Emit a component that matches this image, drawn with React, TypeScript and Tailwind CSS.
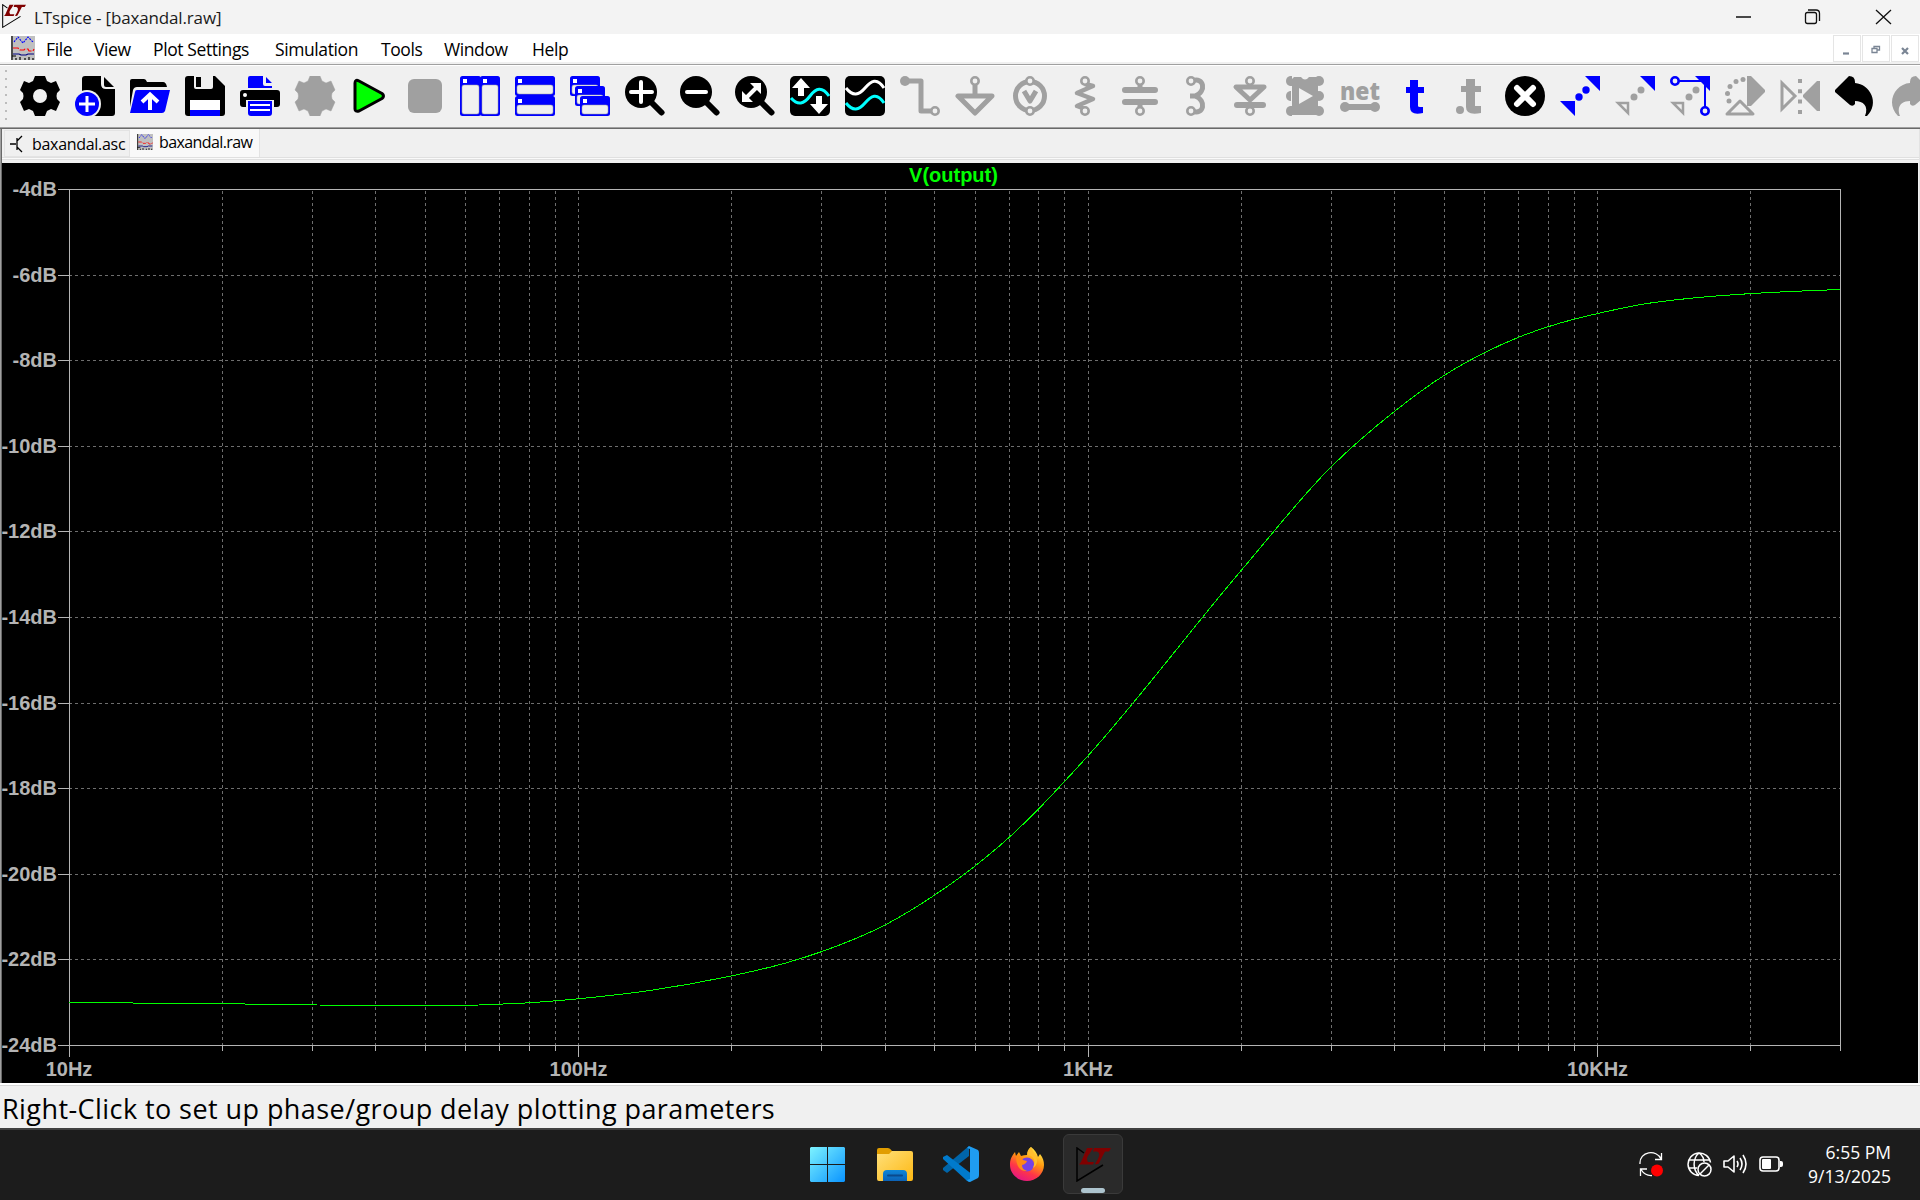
import React from "react";

type P = { children?: React.ReactNode };

const G = "#a0a0a0";
const B = "#0000ff";
const L = "#f0f0f0";

function Tool({ children }: P) {
  return (
    <svg width="40" height="40" viewBox="0 0 40 40" fill="none" className="shrink-0 overflow-visible">
      {children}
    </svg>
  );
}

const gearPath =
  "M15 0H25L27 5L31 7L36 5L40 14L37 17Q36 20 37 23L40 26L36 35L31 33L27 35L25 40H15L13 35L9 33L4 35L0 26L3 23Q4 20 3 17L0 14L4 5L9 7L13 5Z";

function Magnifier({ children }: P) {
  return (
    <Tool>
      <circle cx="16" cy="16" r="16" fill="#000" />
      <path d="M26 26L36.500 36.500" stroke="#000" strokeWidth="6" strokeLinecap="round" />
      {children}
    </Tool>
  );
}

function Pane({ x, y, w, h }: { x: number; y: number; w: number; h: number }) {
  return (
    <g>
      <rect x={x} y={y} width={w} height={h} rx="2.500" fill={B} />
      <rect x={x + 2} y={y + 9} width={w - 4} height={h - 11} rx="2" fill={L} stroke={G} strokeWidth="0.500" />
      <rect x={x + 3} y={y + 3} width="4" height="4" fill="#fff" />
    </g>
  );
}

const Pin = ({ x, y, c = G }: { x: number; y: number; c?: string }) => (
  <circle cx={x} cy={y} r="3.700" fill={L} stroke={c} strokeWidth="2.600" />
);

function Toolbar() {
  return (
    <div className="flex h-[61px] items-center overflow-hidden bg-[#f0f0f0] pb-[2px]">
      <svg width="20" height="57" className="shrink-0" stroke="#bcbcbc" strokeWidth="2">
        <path d="M6 3V56" strokeDasharray="2 6" />
      </svg>
      <div className="flex w-[1900px] gap-[15px] overflow-hidden">
        <Tool>
          <path d={gearPath} fill="#000" />
          <circle cx="20" cy="20" r="7" fill={L} />
        </Tool>
        <Tool>
          <path d="M10 0H26V8Q26 13 31 13H40V37Q40 40 37 40H7V3Q7 0 10 0Z" fill="#000" />
          <path d="M29 1L39 11H31Q29 11 29 9Z" fill="#000" />
          <circle cx="12" cy="28" r="14" fill={L} />
          <circle cx="12" cy="28" r="12" fill={B} />
          <path d="M12 20V36M4 28H20" stroke="#fff" strokeWidth="3" />
        </Tool>
        <Tool>
          <path d="M0 5Q0 3 2 3H14Q16 3 17 6H33Q36 6 37 11H7Q4 11 3 14L0 31Z" fill="#000" />
          <path d="M7 14H40L35 35Q34 37 32 37H0L5 16Q5 14 7 14Z" fill={B} />
          <path d="M20 20V34M12 26L20 18.500L28 26" stroke="#fff" strokeWidth="4" />
        </Tool>
        <Tool>
          <path d="M3 0H30L40 10V37Q40 40 37 40H3Q0 40 0 37V3Q0 0 3 0Z" fill="#000" />
          <path d="M9 0H28V11Q28 13 26 13H11Q9 13 9 11Z" fill={L} />
          <path d="M11 1H16V11H11Z" fill="#000" />
          <path d="M5 24H35V34H5Z" fill="#fff" />
          <path d="M5 34H35V40H5Z" fill={B} />
        </Tool>
        <Tool>
          <path d="M10 0H23V8Q23 10 25 10H32V12H8V2Q8 0 10 0ZM26 1L32 7H26Z" fill={B} />
          <path d="M3 14H37Q40 14 40 17V28Q40 31 37 31H34V24H6V31H3Q0 31 0 28V17Q0 14 3 14Z" fill="#000" />
          <circle cx="5" cy="19" r="2" fill="#fff" />
          <path d="M8 25H32V37Q32 40 29 40H11Q8 40 8 37Z" fill={B} />
          <path d="M10 29H30M10 34H30" stroke="#fff" strokeWidth="2" />
        </Tool>
        <Tool>
          <path d={gearPath} fill={G} stroke={G} strokeWidth="0.500" />
        </Tool>
        <Tool>
          <path d="M5 7Q5 3 9 5L32 17.500Q35 20 32 22.500L9 35Q5 36 5 33Z" fill="#00ff00" stroke="#000" strokeWidth="3" strokeLinejoin="round" />
        </Tool>
        <Tool>
          <rect x="3" y="3" width="34" height="34" rx="6" fill={G} />
        </Tool>
        <Tool>
          <Pane x={0} y={0} w={21} h={40} />
          <Pane x={20} y={0} w={20} h={40} />
        </Tool>
        <Tool>
          <Pane x={0} y={0} w={40} h={20} />
          <Pane x={0} y={20} w={40} h={20} />
        </Tool>
        <Tool>
          <Pane x={0} y={0} w={30} h={20} />
          <Pane x={5} y={10} w={30} h={20} />
          <Pane x={10} y={20} w={30} h={20} />
        </Tool>
        <Magnifier>
          <path d="M16 6V26M6 16H27" stroke="#fff" strokeWidth="4" strokeLinecap="round" />
        </Magnifier>
        <Magnifier>
          <path d="M7 16H26" stroke="#fff" strokeWidth="4" strokeLinecap="round" />
        </Magnifier>
        <Magnifier>
          <path d="M11 22L22 11" stroke="#fff" strokeWidth="4" />
          <path d="M15 7H26V18ZM7 15V26H18Z" fill="#fff" />
        </Magnifier>
        <Tool>
          <rect width="40" height="40" rx="5" fill="#000" />
          <path d="M1 22C8 30 14 28 20 20S32 10 39 20" stroke="#00ffff" strokeWidth="3" />
          <path d="M11 2L20 12H14V20H8V12H2ZM29 38L20 28H26V20H32V28H38Z" fill="#fff" />
        </Tool>
        <Tool>
          <rect width="40" height="40" rx="5" fill="#000" />
          <path d="M1 12C8 21 14 19 20 12S32 1 39 12" stroke="#fff" strokeWidth="3" />
          <path d="M1 27C8 36 14 34 20 27S32 16 39 27" stroke="#00ffff" strokeWidth="3" />
        </Tool>
        <Tool>
          <path d="M5 5H21V35H34" stroke={G} strokeWidth="5" strokeLinejoin="round" />
          <circle cx="5" cy="5" r="5" fill={G} />
          <Pin x={35} y={35} />
        </Tool>
        <Tool>
          <path d="M20 8V19" stroke={G} strokeWidth="5" />
          <path d="M3 20H37L20 37Z" stroke={G} strokeWidth="5" strokeLinejoin="round" />
          <Pin x={20} y={5} />
        </Tool>
        <Tool>
          <circle cx="20" cy="20" r="14.500" stroke={G} strokeWidth="5" />
          <path d="M14 15L20 25L26 15" stroke={G} strokeWidth="5" strokeLinejoin="round" />
          <Pin x={20} y={5} />
          <Pin x={20} y={35} />
        </Tool>
        <Tool>
          <path d="M20 8L28 10L12 17L28 23L12 30L20 33" stroke={G} strokeWidth="4.500" strokeLinejoin="round" />
          <Pin x={20} y={5} />
          <Pin x={20} y={35} />
        </Tool>
        <Tool>
          <path d="M5 14H35M5 26H35" stroke={G} strokeWidth="6" strokeLinecap="round" />
          <path d="M20 8V12M20 28V32" stroke={G} strokeWidth="5" />
          <Pin x={20} y={5} />
          <Pin x={20} y={35} />
        </Tool>
        <Tool>
          <path d="M17 5C29 0 32 16 20 20H15H20C32 24 29 40 17 35" stroke={G} strokeWidth="5" />
          <Pin x={16} y={5} />
          <Pin x={16} y={35} />
        </Tool>
        <Tool>
          <path d="M6 11H34L20 24Z" stroke={G} strokeWidth="5" strokeLinejoin="round" />
          <path d="M7 29H33" stroke={G} strokeWidth="6" strokeLinecap="round" />
          <Pin x={20} y={5} />
          <Pin x={20} y={35} />
        </Tool>
        <Tool>
          <path d="M9 1H16Q20 6 24 1H33V39H7V3Z" fill={G} />
          <g fill={G}>
            <path d="M5 0H7V10H5Q1 9 1 5T5 0ZM5 15H6V25H5Q1 24 1 20T5 15ZM5 30H7V40H5Q1 39 1 35T5 30Z" />
            <circle cx="34" cy="5" r="5" />
            <circle cx="34" cy="20" r="5" />
            <circle cx="34" cy="35" r="5" />
          </g>
          <path d="M14 12L28 20L14 28Z" fill={L} />
        </Tool>
        <Tool>
          <text x="0" y="24" fontFamily="Open Sans, sans-serif" fontWeight="800" fontSize="25" textLength="40" lengthAdjust="spacingAndGlyphs" fill={G}>
            net
          </text>
          <path d="M5 31H35" stroke={G} strokeWidth="6" />
          <circle cx="5" cy="31" r="5" fill={G} />
          <circle cx="35" cy="31" r="5" fill={G} />
        </Tool>
        <Tool>
          <path d="M15 4H23V11H29V17H23V30Q23 31 25 31H28V37Q15 40 15 31V17H11V11H15Z" fill={B} />
        </Tool>
        <Tool>
          <path d="M16 3H25V10H31V16H25V30H31V37Q16 40 16 31V16H11V10H16Z" fill={G} />
          <circle cx="10" cy="34" r="4" fill={G} />
        </Tool>
        <Tool>
          <circle cx="20" cy="20" r="20" fill="#000" />
          <path d="M12 12L28 28M28 12L12 28" stroke="#fff" strokeWidth="6" strokeLinecap="round" />
        </Tool>
        <Tool>
          <path d="M25 0H40V15ZM0 25H15V40Z" fill={B} />
          <circle cx="26" cy="14" r="3.700" fill={B} />
          <circle cx="19" cy="21" r="3.700" fill={B} />
        </Tool>
        <Tool>
          <path d="M25 0H40V15Z" fill={B} />
          <circle cx="26" cy="14" r="3.500" fill={G} />
          <circle cx="19" cy="21" r="3.500" fill={G} />
          <path d="M3 27H13V37Z" stroke={G} strokeWidth="2.500" />
        </Tool>
        <Tool>
          <path d="M25 0H40V15Z" fill={B} />
          <circle cx="26" cy="14" r="3.500" fill={G} />
          <circle cx="19" cy="21" r="3.500" fill={G} />
          <path d="M3 27H13V37Z" stroke={G} strokeWidth="2.500" />
          <path d="M8 5H35V31" stroke={B} strokeWidth="2" />
          <Pin x={5} y={5} c={B} />
          <Pin x={35} y={35} c={B} />
        </Tool>
        <Tool>
          <path d="M22 0H26L40 14V16L26 30H22Z" fill={G} />
          <path d="M2 38L15 25L28 38Z" stroke={G} strokeWidth="3" strokeLinejoin="round" />
          <g fill={G}>
            <circle cx="18" cy="3.500" r="2.500" />
            <circle cx="11" cy="5.500" r="2.500" />
            <circle cx="5" cy="10.500" r="2.500" />
            <circle cx="2.500" cy="17.500" r="2.500" />
            <circle cx="4" cy="25" r="2.500" />
          </g>
        </Tool>
        <Tool>
          <path d="M2 7V33L15 20Z" stroke={G} strokeWidth="3" />
          <path d="M40 5V35H37L23 21V19L37 5Z" fill={G} />
          <path d="M20 3V38" stroke={G} strokeWidth="4" strokeDasharray="4 6.300" />
        </Tool>
        <Tool>
          <path d="M14 0Q20 0 20 6V7C35 8 45 27 32 40H30C34 30 28 25 20 25V28Q18 31 15 29L0 16V14Z" fill="#000" />
        </Tool>
        <Tool>
          <path d="M26 0Q20 0 20 6V7C5 8 -5 27 8 40H10C6 30 12 25 20 25V28Q22 31 25 29L40 16V14Z" fill={G} />
        </Tool>
      </div>
    </div>
  );
}

function LtLogo({ size, ink }: { size: number; ink: string }) {
  return (
    <svg width={size} height={size} viewBox="0 0 35 35" fill="none">
      <path d="M8 6L1 1V34L27 18" stroke={ink} strokeWidth="1.500" />
      <path d="M11 1H17L14 6Q9 12 12 15L18 15L17 17.500H3L5 15Z" fill="#800000" />
      <path d="M18 1H35L33 4.500H29L23 16Q22 18 19 17L22 12Q25 6 21 4.500H17Z" fill="#800000" />
    </svg>
  );
}

function RawIcon({ w, h }: { w: number; h: number }) {
  return (
    <svg width={w} height={h} viewBox="0 0 24 24" fill="none" preserveAspectRatio="none">
      <rect width="24" height="24" fill="#c0c0c0" />
      <path d="M1 0V24M0.500 20H5" stroke="#000" strokeWidth="1.200" />
      <path d="M3 6L7 1L12 7L17 1L22 6" stroke={B} strokeWidth="1.100" strokeDasharray="2 1" />
      <path d="M2 12H7L9 14H13L14 13H17L18 15H22L23 13" stroke="#f00" strokeWidth="1.200" strokeDasharray="6 1.500" />
      <path d="M2 18H8L10 19H15L17 18H23" stroke="#000080" strokeWidth="1.200" />
      <path d="M5 24V22M9 24V21M14 24V22M18 24V21M22 24V22" stroke="#000" strokeWidth="1.200" />
    </svg>
  );
}

function TitleBar() {
  return (
    <div className="flex h-[34px] items-center bg-[#f3f3f3]">
      <div className="ml-[2px] -mt-[2px]">
        <LtLogo size={24} ink="#000" />
      </div>
      <span className="ml-[8px] pt-[2px] text-[17px] tracking-[-0.150px] text-[#1b1b1b]">LTspice - [baxandal.raw]</span>
      <svg className="ml-auto mr-[28px]" width="156" height="16" viewBox="0 0 156 16" fill="none" stroke="#111" strokeWidth="1.300">
        <path d="M0 8H15M140 1L155 15M155 1L140 15" />
        <rect x="69.500" y="3.500" width="11" height="11" rx="2" />
        <path d="M72 1H80Q83.500 1 83.500 4.500V12" />
      </svg>
    </div>
  );
}

const menus = [
  { t: "File", w: "w-[48px]" },
  { t: "View", w: "w-[59px]" },
  { t: "Plot Settings", w: "w-[122px]" },
  { t: "Simulation", w: "w-[106px]" },
  { t: "Tools", w: "w-[63px]" },
  { t: "Window", w: "w-[88px]" },
  { t: "Help", w: "w-[60px]" },
];

function MenuBar() {
  return (
    <div className="flex h-[28px] items-center bg-white">
      <div className="ml-[11px] mr-[11px]">
        <RawIcon w={24} h={24} />
      </div>
      {menus.map((m) => (
        <span key={m.t} className={`${m.w} whitespace-nowrap pt-[3px] text-[17.5px] tracking-[-0.400px] text-black`}>
          {m.t}
        </span>
      ))}
      <div className="ml-auto mr-px flex gap-px self-start pt-px">
        {["M9 17.500H15", "M9 12.500H14V16.500H9ZM11 12V10.500H16.500V14H14", "M10 12L16 18M16 12L10 18"].map((d) => (
          <div key={d} className="h-[27px] w-[28px] border border-[#e5e5e5] bg-white">
            <svg width="26" height="26" fill="none" stroke="#7a8594" strokeWidth="2">
              <path d={d} strokeWidth={d.includes("V10") ? 1.3 : 2.2} />
            </svg>
          </div>
        ))}
      </div>
    </div>
  );
}

function Tabs() {
  return (
    <div className="h-[34px] bg-[#f0f0f0]">
      <div className="flex h-[28px] items-end pl-[2px]">
        <div className="flex h-[27px] w-[126px] items-center border border-[#e3e3e3] pl-[4px]">
          <svg width="16" height="18" viewBox="0 0 16 18" fill="none" stroke="#000" strokeWidth="1.300">
            <path d="M1 9H7M8 3V15M8 6L13 1M8 12L13 17" />
          </svg>
          <span className="ml-[7px] text-[16px] tracking-[-0.300px]">baxandal.asc</span>
        </div>
        <div className="flex h-[28px] w-[130px] items-center border-r border-[#e3e3e3] bg-[#f9f9f9] pb-[2px] pl-[7px]">
          <RawIcon w={16} h={16} />
          <span className="ml-[6px] text-[16px] tracking-[-0.600px]">baxandal.raw</span>
        </div>
      </div>
      <div className="h-[3px] border-y border-[#e0e0e0] bg-[#fafafa]" />
    </div>
  );
}

const X0 = 67;
const DECADE = 509.52;
const Y0 = 26;
const TOP = 26;
const BOTTOM = 882;
const RIGHT = 1838;

const decades = ["10Hz", "100Hz", "1KHz", "10KHz"];

const trace: [number, number][] = [
  [69, 1002.4], [133, 1003], [245, 1004], [317, 1005], [400, 1005.4], [479, 1005], [505, 1003.9], [525, 1003],
  [578, 998.8], [649, 990.6], [732, 975.8], [784, 963.5], [822, 951.5], [886, 924.5], [934, 895.5], [975, 866],
  [1009, 837.5], [1038, 809.5], [1064, 782], [1088, 755.8], [1242, 569.500], [1331, 467], [1395, 411],
  [1444, 375.5], [1484, 353], [1518, 337.5], [1548, 326.8], [1574, 319.2], [1597, 313.7], [1641, 304.5],
  [1690, 298.3], [1740, 294.3], [1790, 291.500], [1840, 289.5],
];

function tracePath() {
  const p = trace.map(([x, y]) => [x - 2, y - 163]);
  const n = p.length;
  const slope = (i: number) => (p[i + 1][1] - p[i][1]) / (p[i + 1][0] - p[i][0]);
  const tangent = (i: number) => {
    if (i === 0) return slope(0);
    if (i === n - 1) return slope(n - 2);
    const h0 = p[i][0] - p[i - 1][0];
    const h1 = p[i + 1][0] - p[i][0];
    return (slope(i - 1) * h1 + slope(i) * h0) / (h0 + h1);
  };
  let d = `M${p[0][0]} ${p[0][1]}`;
  for (let i = 0; i < n - 1; i++) {
    const b = p[i];
    const c = p[i + 1];
    const h = (c[0] - b[0]) / 3;
    d += `C${b[0] + h} ${b[1] + tangent(i) * h} ${c[0] - h} ${c[1] - tangent(i + 1) * h} ${c[0]} ${c[1]}`;
  }
  return d;
}

function Plot() {
  const vlines: number[] = [];
  for (let d = 0; d < 4; d++)
    for (let k = 1; k < 10; k++) {
      if (d === 3 && k > 2) break;
      if (d === 0 && k === 1) continue;
      vlines.push(Math.floor(X0 + DECADE * (d + Math.log10(k))) + 0.5);
    }
  const rows = Array.from({ length: 11 }, (_, i) => i);
  return (
    <svg width="1916" height="920" viewBox="0 0 1916 920" className="block bg-black" fill="none">
      <g stroke="#6e6e6e" strokeDasharray="3 3" shapeRendering="crispEdges">
        {vlines.map((x) => (
          <path key={x} d={`M${x} ${TOP + 2}V${BOTTOM}`} />
        ))}
        {rows.slice(1, 10).map((i) => (
          <path key={i} d={`M${X0} ${Math.round(Y0 + i * 85.6) + 0.5}H${RIGHT}`} />
        ))}
      </g>
      <g stroke="#b4b4b4" shapeRendering="crispEdges">
        <path d={`M${X0 + 0.5} ${TOP}V${BOTTOM + 12}M${RIGHT + 0.5} ${TOP}V${BOTTOM + 6}`} />
        {vlines.map((x, i) => (
          <path key={x} d={`M${x} ${BOTTOM}v${i === 8 || i === 17 || i === 26 ? 12 : 6}`} />
        ))}
        {rows.map((i) => (
          <path key={i} d={`M56 ${Math.round(Y0 + i * 85.6) + 0.5}H${i % 10 ? X0 : RIGHT}`} />
        ))}
      </g>
      <path d={tracePath()} stroke="#00ff00" shapeRendering="crispEdges" />
      <g fill="#b4b4b4" fontFamily="Liberation Sans, Arial, sans-serif" fontWeight="700" fontSize="20">
        {rows.map((i) => (
          <text key={i} x="55" y={Math.round(Y0 + i * 85.6) + 7} textAnchor="end">
            {`-${4 + i * 2}dB`}
          </text>
        ))}
        {decades.map((t, i) => (
          <text key={t} x={X0 + DECADE * i} y="912.5" textAnchor="middle">
            {t}
          </text>
        ))}
        <text x="951.5" y="19" textAnchor="middle" fill="#00ff00">
          V(output)
        </text>
      </g>
    </svg>
  );
}

function Taskbar() {
  return (
    <div className="flex h-[72px] border-t-2 border-[#404040] bg-[#1c1c1c]">
      <div className="ml-[810px] flex items-center pb-[2px]">
        <svg width="35" height="35" viewBox="0 0 35 35">
          <defs>
            <linearGradient id="win" x1="0" y1="0" x2="1" y2="1" gradientUnits="objectBoundingBox">
              <stop offset="0" stopColor="#7df3ff" />
              <stop offset="1" stopColor="#0a94ff" />
            </linearGradient>
          </defs>
          <path d="M1 0H17V17H0V1ZM18 0H34L35 1V17H18ZM0 18H17V35H1L0 34ZM18 18H35V34L34 35H18Z" fill="url(#win)" />
        </svg>
        <svg className="ml-[32px]" width="36" height="33" viewBox="0 0 36 33">
          <defs>
            <linearGradient id="fold" x1="0" y1="0" x2="1" y2="1">
              <stop offset="0" stopColor="#ffe07a" />
              <stop offset="1" stopColor="#fdb813" />
            </linearGradient>
            <linearGradient id="pocket" x1="0" y1="0" x2="0" y2="1">
              <stop offset="0" stopColor="#0f86d8" />
              <stop offset="1" stopColor="#0c62b6" />
            </linearGradient>
          </defs>
          <path d="M0 2Q0 0 2 0H11Q13 0 15 3H34V12H0Z" fill="#e19d00" />
          <path d="M0 6H12L15 3H34Q36 3 36 5V31Q36 33 34 33H2Q0 33 0 31Z" fill="url(#fold)" />
          <path d="M6 33V26Q6 22 10 22H26Q30 22 30 26V33Z" fill="url(#pocket)" />
          <path d="M11 27.500H25" stroke="#0b4a8c" strokeWidth="2" strokeLinecap="round" />
        </svg>
        <svg className="ml-[30px]" width="36" height="36" viewBox="0 0 36 36">
          <path d="M26 10L4 27L0 24V22L26 0Z" fill="#0065a9" />
          <path d="M0 13V11L4 9L30 29L27 36Q24 36 22 33Z" fill="#007acc" />
          <path d="M26 0L35 4Q36 5 36 7V29Q36 31 35 32L27 36Q25 36 24 34L27 33V3L24 2Z" fill="#1f9cf0" />
        </svg>
        <svg className="ml-[31px]" width="34" height="34" viewBox="0 0 34 34">
          <defs>
            <linearGradient id="fox" x1="0.800" y1="0" x2="0.300" y2="1">
              <stop offset="0" stopColor="#fff44f" />
              <stop offset="0.400" stopColor="#ff980e" />
              <stop offset="0.700" stopColor="#ff3647" />
              <stop offset="1" stopColor="#e31587" />
            </linearGradient>
          </defs>
          <path d="M21 0C25 3 27 6 28 10L30 7C33 11 34 14 34 18C34 27 26 34 17 34S0 27 0 18C0 13 1 10 5 5L6 9L9 5L11 9Q14 8 17 8C17 5 18 2 21 0Z" fill="url(#fox)" />
          <circle cx="17" cy="17.500" r="7" fill="#7542e5" />
          <path d="M6 9C9 8 11 10 13 13L17 14Q16 17 12 18C12 22 15 23 17 24C10 25 6 19 6 9Z" fill="#ff8a16" />
          <path d="M18 8C24 9 26 14 23 21C28 18 28 12 25 8L21 0C18 3 17 5 18 8Z" fill="#ffbd2f" />
        </svg>
        <div className="relative ml-[19px] flex h-[60px] w-[60px] items-center justify-center rounded-[6px] border border-[#3a3a3a] bg-[#2a2a2a]">
          <LtLogo size={35} ink="#000" />
          <div className="absolute bottom-0 left-[17px] h-[5px] w-[24px] rounded-full bg-[#adc4ce]" />
        </div>
      </div>
      <div className="ml-auto flex items-center pb-[2px] pr-[29px] text-white">
        <svg width="24" height="25" viewBox="0 0 24 25" fill="none" stroke="#fff" strokeWidth="1.300">
          <path d="M1 12C0 -1 18 -3 22 7M22.500 1V7.500H16M13 23.500Q6 24 2 17.500M1.500 24V17H8" />
          <circle cx="18" cy="18.500" r="6" fill="#ff0000" stroke="none" />
        </svg>
        <svg className="ml-[24px]" width="25" height="25" viewBox="0 0 25 25" fill="none" stroke="#fff" strokeWidth="1.500">
          <path d="M12 23.500A11.300 11.300 0 1 1 23.500 10.500M12 23.500C5 17 6 6 12 1C15 3 17 7 17 10M2 8H22M2 16H10" />
          <circle cx="17.500" cy="17.500" r="6.500" />
          <path d="M13 22L22 13" />
        </svg>
        <svg className="ml-[11px]" width="25" height="22" viewBox="0 0 25 22" fill="none" stroke="#fff" strokeWidth="1.600">
          <path d="M1 8V14H5L11 19V3L5 8ZM14 8Q16 11 14 14M17 5Q21 11 17 17M20 2Q26 11 20 20" strokeLinejoin="round" />
        </svg>
        <svg className="ml-[11px]" width="25" height="17" viewBox="0 0 25 17" fill="none">
          <rect x="1" y="1" width="19" height="14" rx="3" stroke="#fff" strokeWidth="1.600" />
          <rect x="3" y="3" width="9" height="10" rx="1" fill="#fff" />
          <path d="M21 5H22Q24 5 24 7V9Q24 11 22 11H21Z" fill="#fff" />
        </svg>
        <div className="ml-[23px] w-[84px] whitespace-nowrap text-right text-[17.5px] leading-[24px]">
          <div>6:55 PM</div>
          <div>9/13/2025</div>
        </div>
      </div>
    </div>
  );
}

export default function App() {
  return (
    <div className="flex h-[1200px] w-[1920px] flex-col overflow-hidden bg-[#f0f0f0] font-['Open_Sans','Noto_Sans',sans-serif] text-black">
      <TitleBar />
      <MenuBar />
      <div className="h-[4px] border-b border-white bg-[#f0f0f0] pt-[2px]">
        <div className="h-px bg-[#a0a0a0]" />
      </div>
      <Toolbar />
      <div className="h-px bg-[#a0a0a0]" />
      <div className="h-px bg-[#696969]" />
      <div className="h-[954px] border-l border-[#a0a0a0]">
        <div className="h-[954px] border-l border-r border-l-[#696969] border-r-[#e3e3e3]">
          <Tabs />
          <Plot />
        </div>
      </div>
      <div className="h-[3px] border-b border-[#d7d7d7] bg-white" />
      <div className="flex h-[42px] items-center bg-[#f0f0f0] pl-[2px] pt-[3px]">
        <span className="whitespace-nowrap text-[27px] leading-[36px] tracking-[0.430px]">
          Right-Click to set up phase/group delay plotting parameters
        </span>
      </div>
      <Taskbar />
    </div>
  );
}
